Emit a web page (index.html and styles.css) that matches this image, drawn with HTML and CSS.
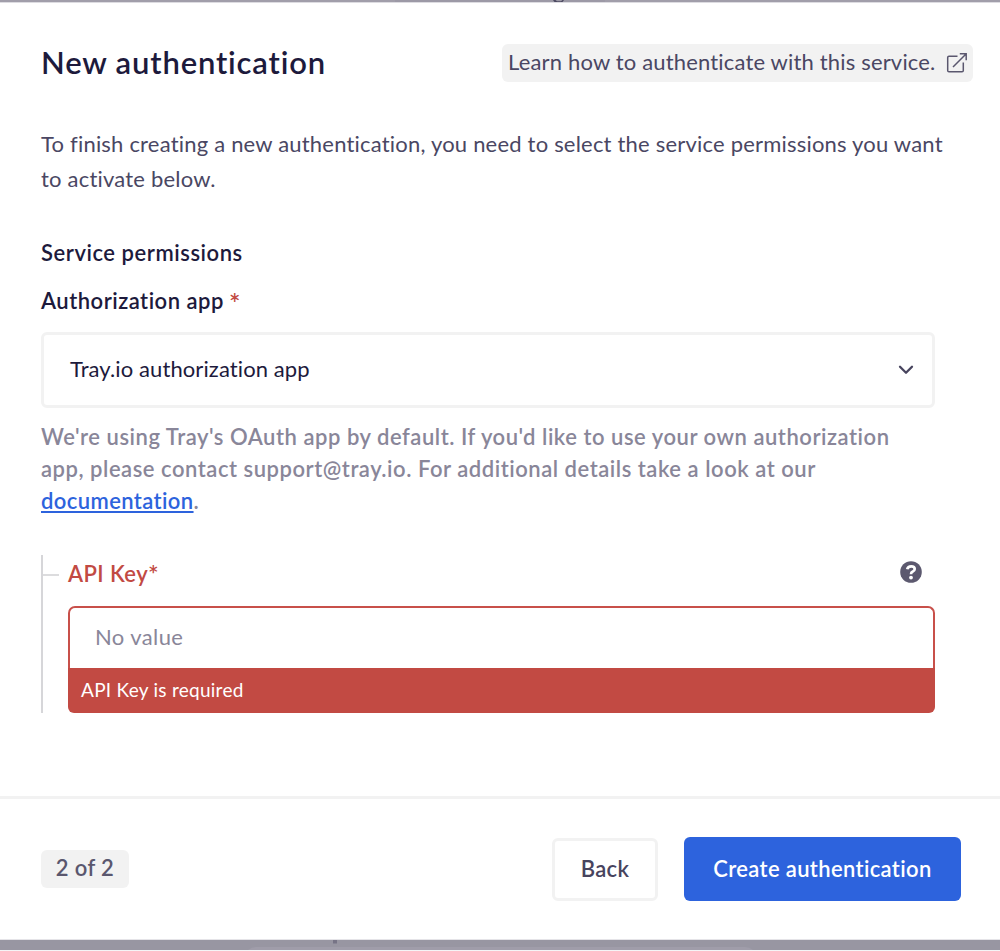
FILE: index.html
```html
<!DOCTYPE html>
<html lang="en">
<head>
<meta charset="utf-8">
<title>New authentication</title>
<link rel="stylesheet" href="styles.css">
</head>
<body>
<div class="backdrop-top"><svg width="1000" height="2" viewBox="0 0 1000 2"><path d="M395 0h210v2H395z" fill="#9c99a6"/><path d="M553 0h2.500l1.500 1.200h4l1.500-1.200h1.500l-1.500 2h-8z" fill="#4b4860"/></svg></div>
<main class="modal">
  <header class="header">
    <h1 class="title">New authentication</h1>
    <a class="learn"><span class="learn-text">Learn how to authenticate with this service.</span>
      <svg class="external" width="22" height="22" viewBox="0 0 22 22" fill="none" stroke="#5a576e" stroke-width="1.500"><path d="M11.500 4.200H3Q1.700 4.200 1.700 5.500V18.500Q1.700 19.800 3 19.800H16Q17.300 19.800 17.300 18.500V10.500M13.800 1.800H20.200V8.200M20 2L7 15"/></svg>
    </a>
  </header>
  <p class="intro">To finish creating a new authentication, you need to select the service permissions you want<br>to activate below.</p>
  <h2 class="section">Service permissions</h2>
  <div class="label">Authorization app <span class="star">*</span></div>
  <div class="select"><span class="select-text">Tray.io authorization app</span>
    <svg width="16" height="10" viewBox="0 0 16 10" fill="none" stroke="#47445e" stroke-width="2.300" stroke-linecap="round" stroke-linejoin="round"><path d="M2 1.700L8 7.700L14 1.700"/></svg>
  </div>
  <p class="help">We're using Tray's OAuth app by default. If you'd like to use your own authorization<br>app, please contact support@tray.io. For additional details take a look at our<br><a class="doc">documentation</a>.</p>
  <section class="nested">
    <div class="tick"></div>
    <div class="field">
      <div class="field-head"><span class="field-label">API Key<span class="required">*</span></span>
        <svg width="22" height="22" viewBox="0 0 22 22"><circle cx="11" cy="11" r="10.800" fill="#5c596f"/><path d="M7.200 8.300Q7.900 5.300 11.200 5.300Q14.700 5.300 14.700 8Q14.700 9.600 12.800 10.500Q11 11.300 11 13.200" fill="none" stroke="#fff" stroke-width="2.700"/><circle cx="11" cy="16.600" r="1.900" fill="#fff"/></svg>
      </div>
      <div class="input">No value</div>
      <div class="error">API Key is required</div>
    </div>
  </section>
  <footer class="footer">
    <span class="step">2 of 2</span>
    <div class="actions">
      <div class="back"><span>Back</span></div>
      <div class="create"><span>Create authentication</span></div>
    </div>
  </footer>
</main>
<div class="backdrop-bottom"><svg width="1000" height="11" viewBox="0 0 1000 11"><path d="M247 11Q251 7 256 7H745Q750 7 754 11z" fill="#a09daa"/><path d="M333 0h4v3.500h-4z" fill="#777486"/></svg></div>
</body>
</html>
```
FILE: styles.css
```css
* { box-sizing: border-box; }
body { margin: 0; width: 1000px; height: 951px; overflow: hidden; background: #fff; color: #1d1a3c; font-family: Lato, "Open Sans", sans-serif; font-size: 22px; white-space: nowrap; }
svg { display: block; flex: none; }
h1, h2, p { margin: 0; }
.backdrop-top { height: 3px; background: #a19eaa; border-bottom: 1px solid #dddce1; }
.modal { height: 936px; display: flex; flex-direction: column; }
.header { height: 116px; padding: 41px 27px 0 41px; display: flex; justify-content: space-between; align-items: flex-start; }
.title { font-size: 31px; line-height: 36px; font-weight: 600; letter-spacing: .83px; }
.learn { width: 471px; height: 38px; padding: 0 5px 0 6px; border-radius: 6px; background: #f2f2f2; color: #4a4763; display: flex; align-items: center; justify-content: space-between; }
.learn-text { height: 38px; line-height: 36px; letter-spacing: .17px; }
.intro { margin: 7px 0 0 41px; line-height: 35px; color: #4a4763; letter-spacing: .2px; }
.section { margin: 42px 0 0 41px; font-size: 22px; line-height: 30px; font-weight: 600; letter-spacing: .55px; }
.label { margin: 18px 0 0 41px; line-height: 30px; font-weight: 600; letter-spacing: .5px; }
.star { color: #c24a43; font-size: 27px; line-height: 20px; vertical-align: -4px; margin-left: -1px; }
.select { margin: 16px 0 0 41px; width: 894px; height: 76px; border: 3px solid #f2f2f2; border-radius: 6px; padding: 0 18px 0 26px; display: flex; align-items: center; justify-content: space-between; letter-spacing: .1px; }
.select-text { padding-bottom: 3px; }
.help { margin: 13px 0 0 41px; line-height: 32px; font-weight: 600; color: #898699; letter-spacing: .53px; }
.doc { color: #2d63dd; letter-spacing: .4px; text-decoration: underline; text-decoration-thickness: 2px; text-underline-offset: 2px; }
.nested { margin: 38px 0 0 41px; width: 894px; height: 158px; border-left: 2px solid #d6d6d9; display: flex; }
.tick { width: 16px; height: 2px; margin: 19px 9px 0 0; background: #dcdcde; }
.field { flex: 1; }
.field-head { height: 51px; padding: 6px 13px 0 0; display: flex; justify-content: space-between; align-items: flex-start; }
.field-label { line-height: 26px; color: #c24a43; font-weight: 600; letter-spacing: .4px; }
.required { font-size: 25px; line-height: 20px; vertical-align: -2px; }
.input { height: 62px; padding-left: 25px; border: 2px solid #c8504a; border-bottom: 0; border-radius: 7px 7px 0 0; line-height: 58px; color: #898699; letter-spacing: .4px; }
.error { height: 45px; padding-left: 13px; border-radius: 0 0 6px 6px; background: #c24a43; color: #fff; line-height: 44px; font-size: 19px; letter-spacing: .27px; }
.footer { margin-top: auto; height: 143px; border-top: 3px solid #f2f2f2; padding: 0 39px 0 41px; display: flex; align-items: center; justify-content: space-between; font-weight: 600; letter-spacing: .35px; }
.step { width: 88px; height: 38px; border-radius: 6px; background: #f2f2f2; color: #5a576e; text-align: center; line-height: 36px; }
.actions { display: flex; align-items: center; gap: 26px; }
.back, .create { display: flex; align-items: center; justify-content: center; border-radius: 6px; padding-bottom: 1px; }
.back { width: 106px; height: 63px; border: 3px solid #f2f2f2; color: #47445e; }
.create { width: 277px; height: 64px; background: #2d63dd; color: #fff; }
.backdrop-bottom { height: 12px; background: #9896a2; border-top: 1px solid #e5e4e8; border-bottom: 1px solid #f4f4f6; overflow: hidden; }
```
